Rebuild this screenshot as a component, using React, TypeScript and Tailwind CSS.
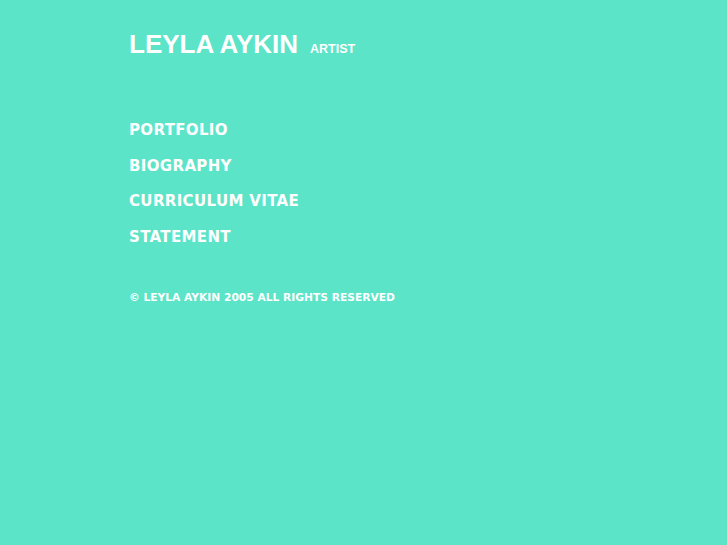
import React from 'react';

const links = ['PORTFOLIO', 'BIOGRAPHY', 'CURRICULUM VITAE', 'STATEMENT'];

const App: React.FC = () => {
  return (
    <div className="min-h-[545px] w-full bg-[#5ce4c8] text-white">
      <div className="pl-[129px] pt-[29px]">
        <div className="flex items-baseline font-['Liberation_Sans',Arial,sans-serif] font-bold">
          <h1 className="text-[26px] leading-[30px]">LEYLA AYKIN</h1>
          <span className="ml-[12px] text-[12.5px]">ARTIST</span>
        </div>

        <nav className="mt-[58px] flex flex-col font-['DejaVu_Sans',Verdana,sans-serif] font-bold text-[15px] tracking-[0.35px]">
          {links.map((l) => (
            <a key={l} href="#" className="h-[35.5px] leading-[18px] pt-[4px]">
              {l}
            </a>
          ))}
        </nav>

        <p className="mt-[31px] font-['DejaVu_Sans',Verdana,sans-serif] font-bold text-[10.7px]">
          © LEYLA AYKIN 2005 ALL RIGHTS RESERVED
        </p>
      </div>
    </div>
  );
};

export default App;
